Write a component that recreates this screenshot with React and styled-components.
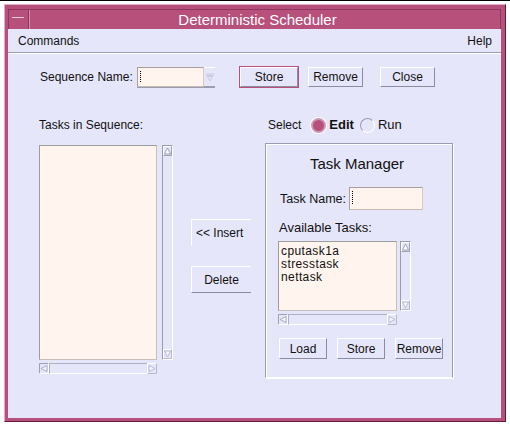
import React from 'react';
import styled, { createGlobalStyle } from 'styled-components';

const Global = createGlobalStyle`
  html, body { margin: 0; padding: 0; background: #fff; }
  body {
    font-family: "Liberation Sans", Arial, sans-serif;
    font-size: 12px;
    color: #111;
  }
  * { box-sizing: border-box; }
`;

const Page = styled.div`
  width: 510px;
  height: 428px;
  border-top: 1px solid #000;
  padding: 3px 4px 0 4px;
`;

const Frame = styled.div`
  width: 502px;
  height: 418px;
  background: #b8507c;
  border: 1px solid;
  border-color: #e4acc6 #5e1c3a #5e1c3a #e4acc6;
  padding: 4px 4px 3px 3px;
  display: flex;
  flex-direction: column;
`;

const TitleBar = styled.div`
  height: 20px;
  display: flex;
  border: 1px solid #8e3460;
  border-bottom: none;
  background: #b8507c;
`;

const WinMenuBox = styled.div`
  width: 20px;
  border-right: 1px solid #8e3460;
  box-shadow: 1px 0 0 #d890b2;
  display: flex;
  align-items: flex-start;
  padding: 7px 0 0 3px;
  &::before {
    content: "";
    width: 12px;
    height: 1px;
    background: #f0d0e0;
  }
`;

const Title = styled.div`
  flex: 1;
  text-align: center;
  color: #fff;
  font-size: 15px;
  line-height: 19px;
  padding-right: 14px;
`;

const MenuBar = styled.div`
  height: 24px;
  background: #e6e6fa;
  display: flex;
  justify-content: space-between;
  align-items: center;
  padding: 0 9px 0 10px;
  border-bottom: 1px solid #9c9cb0;
  font-size: 12px;
`;

const Content = styled.div`
  flex: 1;
  background: #e6e6fa;
  border-top: 1px solid #fff;
  display: flex;
  flex-direction: column;
`;

const TopRow = styled.div`
  display: flex;
  align-items: center;
  margin-top: 13px;
  padding-left: 32px;
  height: 20px;
`;

const Label = styled.span`
  font-size: ${p => p.$fs || 12}px;
  white-space: nowrap;
  width: ${p => (p.$w ? `${p.$w}px` : 'auto')};
`;

const Combo = styled.div`
  display: flex;
  align-items: center;
  height: 21px;
  width: 78px;
  border-top: 1px solid #fff;
  border-bottom: 2px solid #9c9cb0;
`;

const Field = styled.div`
  width: ${p => p.$w}px;
  height: ${p => p.$h}px;
  background: #fff5ee;
  border: 1px solid;
  border-color: #a8a0a0 #d8ccc0 #c8bcb0 #a8a0a0;
  position: relative;
  &::before {
    content: "";
    position: absolute;
    left: 2px;
    top: 3px;
    width: 1px;
    height: ${p => p.$h - 9}px;
    background-image: linear-gradient(#000 50%, transparent 50%);
    background-size: 1px 2px;
  }
`;

const ComboArrow = styled.svg`
  width: 10px;
  height: 10px;
  margin-left: 1px;
`;

const Button = styled.div`
  width: ${p => p.$w}px;
  height: ${p => p.$h || 20}px;
  margin-left: ${p => p.$ml || 0}px;
  display: flex;
  align-items: center;
  justify-content: center;
  font-size: 12px;
  background: #e6e6fa;
  border: 1px solid;
  border-color: #fff #8c8ca0 #8c8ca0 #fff;
  outline: ${p => (p.$focus ? '1px solid #b8507c' : 'none')};
  outline-offset: 0;
  white-space: nowrap;
`;

const SideButton = styled.div`
  width: 60px;
  height: 27px;
  display: flex;
  align-items: center;
  justify-content: ${p => (p.$left ? 'flex-start' : 'center')};
  padding-left: ${p => (p.$left ? 4 : 0)}px;
  font-size: 12px;
  border-top: 1px solid #fff;
  border-left: 1px solid #fff;
  border-bottom: ${p => (p.$bottom ? '1px solid #8c8ca0' : 'none')};
  margin-top: ${p => p.$mt}px;
`;

const Main = styled.div`
  display: flex;
  margin-top: 31px;
`;

const LeftCol = styled.div`
  padding-left: 31px;
  display: flex;
  flex-direction: column;
`;

const ColLabel = styled.div`
  height: 14px;
  line-height: 14px;
  font-size: 12px;
  padding-left: ${p => p.$pl || 0}px;
  display: flex;
  align-items: center;
`;

const ListRow = styled.div`
  display: flex;
  gap: ${p => p.$gap}px;
  margin-top: ${p => p.$mt || 0}px;
`;

const ListBox = styled.div`
  width: ${p => p.$w}px;
  height: ${p => p.$h}px;
  background: #fff5ee;
  border: 1px solid;
  border-color: #9c9c9c #c8c0b8 #c8c0b8 #9c9c9c;
  padding: 3px 0 0 2px;
  font-size: 12px;
  line-height: 13px;
  letter-spacing: 0.4px;
`;

const VScroll = styled.div`
  width: 11px;
  height: ${p => p.$h}px;
  border: 1px solid;
  border-color: #9c9cb0 #fff #fff #9c9cb0;
  display: flex;
  flex-direction: column;
  justify-content: space-between;
`;

const HScroll = styled.div`
  width: ${p => p.$w}px;
  height: 11px;
  margin-top: 3px;
  display: flex;
`;

const HTrack = styled.div`
  flex: 1;
  border-top: 1px solid #b0b0c0;
  border-bottom: 1px solid #fff;
  border-left: 1px solid #b0b0c0;
`;

const ArrowBox = styled.svg`
  width: 9px;
  height: 10px;
  flex: none;
`;

const HArrowBox = styled.svg`
  width: 10px;
  height: 11px;
  flex: none;
`;

const MidCol = styled.div`
  margin-left: 18px;
  display: flex;
  flex-direction: column;
  padding-top: 101px;
`;

const RightCol = styled.div`
  margin-left: 14px;
  display: flex;
  flex-direction: column;
`;

const Radio = styled.span`
  width: 15px;
  height: 15px;
  border-radius: 50%;
  margin: 0 3px 0 ${p => p.$ml}px;
  background: ${p => (p.$on ? '#b8507c' : '#e6e6fa')};
  border: ${p => (p.$on ? '2px solid' : '1px solid')};
  border-color: ${p => (p.$on ? '#c99ab4' : '#9c9cb0 #fff #fff #9c9cb0')};
  box-shadow: ${p => (p.$on ? '0 0 0 1px #fff' : 'none')};
  flex: none;
`;

const RadioText = styled.span`
  font-size: 13px;
  font-weight: ${p => (p.$bold ? 'bold' : 'normal')};
`;

const Panel = styled.div`
  width: 188px;
  height: 235px;
  margin-top: 11px;
  border: 1px solid;
  border-color: #9c9cb0 #9c9cb0 #fff #9c9cb0;
  box-shadow: 1px 1px 0 #fff, inset 1px 1px 0 #fff;
  display: flex;
  flex-direction: column;
  padding: 0 0 0 12px;
`;

const PanelTitle = styled.div`
  text-align: center;
  font-size: 15px;
  margin: 11px 0 0 -16px;
  line-height: 17px;
`;

const PanelRow = styled.div`
  display: flex;
  align-items: center;
  margin-top: ${p => p.$mt}px;
  padding-left: ${p => p.$pl || 0}px;
`;

const ButtonRow = styled.div`
  display: flex;
  gap: 10px;
  margin-top: 13px;
  padding-left: 1px;
`;

const UpArrow = () => (
  <ArrowBox viewBox="0 0 9 10">
    <rect x="0" y="0" width="9" height="10" fill="#e6e6fa" />
    <path d="M0.5 9.5 V0.5 H8.5" stroke="#fff" fill="none" />
    <path d="M0.5 9.5 H8.5 V0.5" stroke="#a0a0b4" fill="none" />
    <path d="M4.5 2 L1.5 8 H7.5 Z" fill="#fff" stroke="#8c8ca0" strokeWidth="0.8" />
  </ArrowBox>
);

const DownArrow = () => (
  <ArrowBox viewBox="0 0 9 10">
    <rect x="0" y="0" width="9" height="10" fill="#e6e6fa" />
    <path d="M0.5 9.5 V0.5 H8.5" stroke="#fff" fill="none" />
    <path d="M0.5 9.5 H8.5 V0.5" stroke="#b8b8c8" fill="none" />
    <path d="M1.5 2 L7.5 2 L4.5 8 Z" fill="#f4f4ff" stroke="#b0b0c4" strokeWidth="0.8" />
  </ArrowBox>
);

const LeftArrow = () => (
  <HArrowBox viewBox="0 0 10 11">
    <rect x="0" y="0" width="10" height="11" fill="#e6e6fa" />
    <path d="M0.5 10.5 V0.5 H9.5" stroke="#a0a0b4" fill="none" />
    <path d="M0.5 10.5 H9.5 V0.5" stroke="#fff" fill="none" />
    <path d="M2 5.5 L8 2.5 V8.5 Z" fill="#f4f4ff" stroke="#a0a0b4" strokeWidth="0.8" />
  </HArrowBox>
);

const RightArrow = () => (
  <HArrowBox viewBox="0 0 10 11">
    <rect x="0" y="0" width="10" height="11" fill="#e6e6fa" />
    <path d="M0.5 10.5 V0.5 H9.5" stroke="#fff" fill="none" />
    <path d="M0.5 10.5 H9.5 V0.5" stroke="#b8b8c8" fill="none" />
    <path d="M8 5.5 L2 2.5 V8.5 Z" fill="#f4f4ff" stroke="#b0b0c4" strokeWidth="0.8" />
  </HArrowBox>
);

const ScrollList = ({ w, h, gap, mt, items }) => (
  <>
    <ListRow $gap={gap} $mt={mt}>
      <ListBox $w={w} $h={h}>
        {items.map(t => (
          <div key={t}>{t}</div>
        ))}
      </ListBox>
      <VScroll $h={h}>
        <UpArrow />
        <DownArrow />
      </VScroll>
    </ListRow>
    <HScroll $w={w}>
      <LeftArrow />
      <HTrack />
      <RightArrow />
    </HScroll>
  </>
);

export default function App() {
  return (
    <>
      <Global />
      <Page>
        <Frame>
          <TitleBar>
            <WinMenuBox />
            <Title>Deterministic Scheduler</Title>
          </TitleBar>
          <MenuBar>
            <span>Commands</span>
            <span>Help</span>
          </MenuBar>
          <Content>
            <TopRow>
              <Label $w={97}>Sequence Name:</Label>
              <Combo>
                <Field $w={68} $h={20} />
                <ComboArrow viewBox="0 0 10 10">
                  <path d="M1 2 H9 L5 9 Z" fill="none" stroke="#c8c8d8" strokeWidth="1" />
                  <path d="M3 4 H7" stroke="#b0b0c4" />
                </ComboArrow>
              </Combo>
              <Button $w={58} $ml={25} $focus>Store</Button>
              <Button $w={55} $ml={10}>Remove</Button>
              <Button $w={55} $ml={17}>Close</Button>
            </TopRow>
            <Main>
              <LeftCol>
                <ColLabel>Tasks in Sequence:</ColLabel>
                <ScrollList w={118} h={215} gap={5} mt={13} items={[]} />
              </LeftCol>
              <MidCol>
                <SideButton $mt={0} $left>&lt;&lt; Insert</SideButton>
                <SideButton $mt={20} $bottom>Delete</SideButton>
              </MidCol>
              <RightCol>
                <ColLabel $pl={3}>
                  <Label>Select</Label>
                  <Radio $on $ml={10} />
                  <RadioText $bold>Edit</RadioText>
                  <Radio $ml={6} />
                  <RadioText>Run</RadioText>
                </ColLabel>
                <Panel>
                  <PanelTitle>Task Manager</PanelTitle>
                  <PanelRow $mt={15} $pl={2}>
                    <Label $w={69} $fs={12.5}>Task Name:</Label>
                    <Field $w={74} $h={23} />
                  </PanelRow>
                  <PanelRow $mt={10} $pl={1}>
                    <Label $fs={13}>Available Tasks:</Label>
                  </PanelRow>
                  <ListRow $gap={3} $mt={6}>
                    <ListBox $w={119} $h={70}>
                      <div>cputask1a</div>
                      <div>stresstask</div>
                      <div>nettask</div>
                    </ListBox>
                    <VScroll $h={70}>
                      <UpArrow />
                      <DownArrow />
                    </VScroll>
                  </ListRow>
                  <HScroll $w={119}>
                    <LeftArrow />
                    <HTrack />
                    <RightArrow />
                  </HScroll>
                  <ButtonRow>
                    <Button $w={48} $h={21}>Load</Button>
                    <Button $w={48} $h={21}>Store</Button>
                    <Button $w={48} $h={21}>Remove</Button>
                  </ButtonRow>
                </Panel>
              </RightCol>
            </Main>
          </Content>
        </Frame>
      </Page>
    </>
  );
}
